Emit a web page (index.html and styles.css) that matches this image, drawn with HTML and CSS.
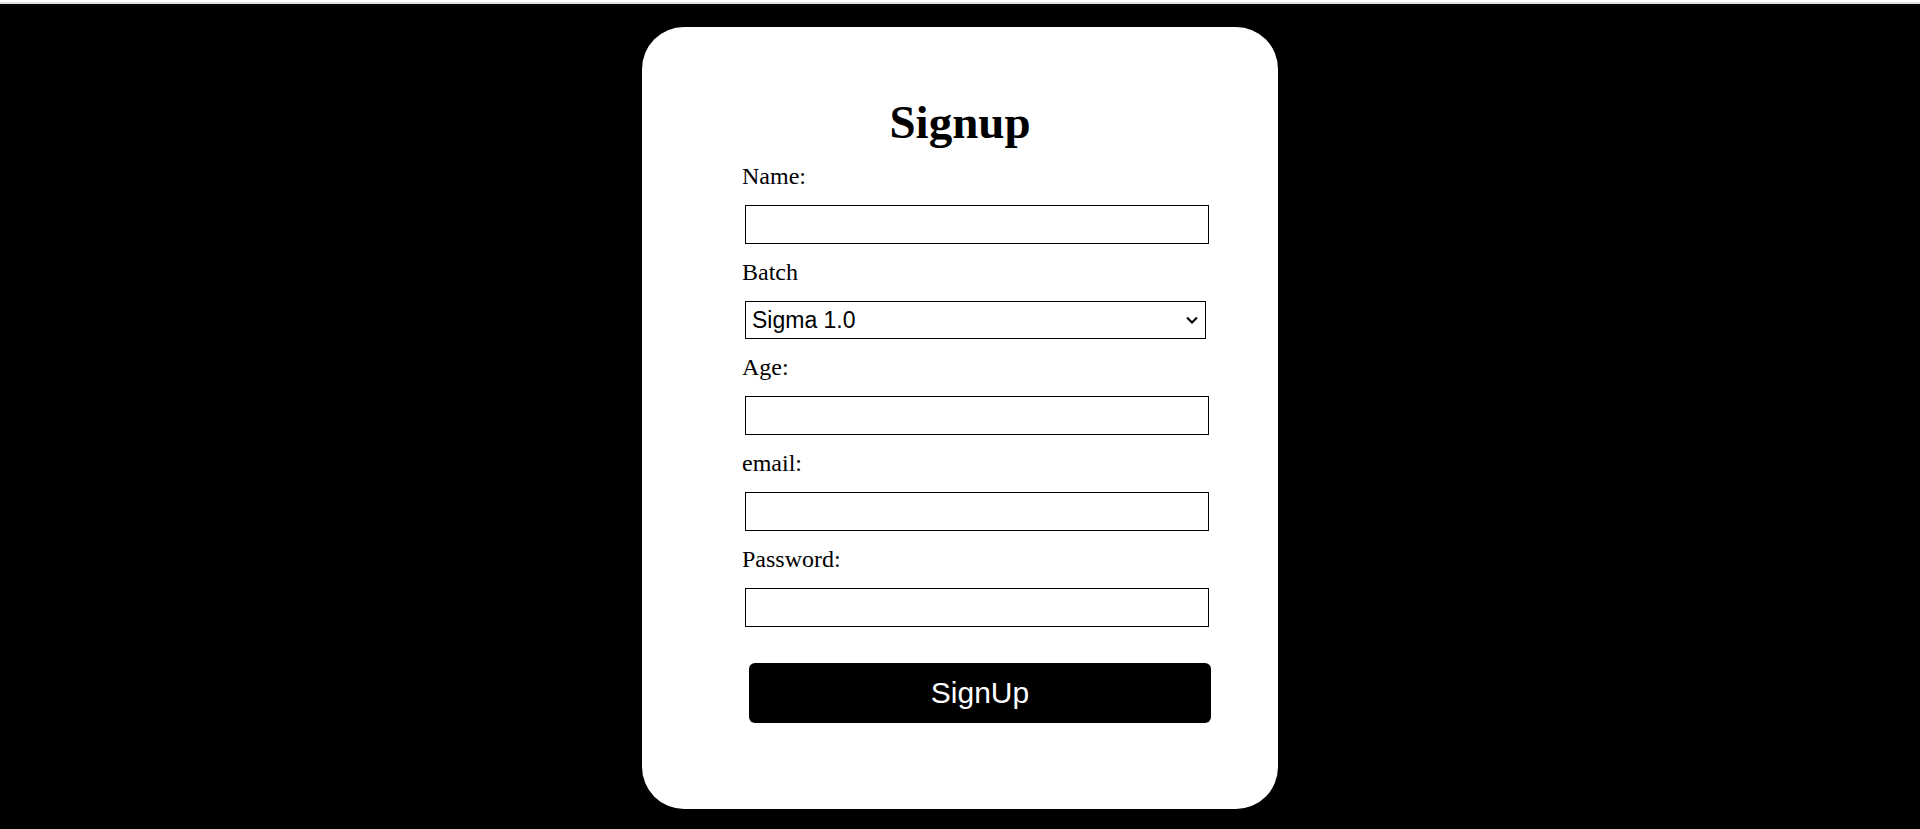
FILE: index.html
```html
<!DOCTYPE html>
<html lang="en">

<head>
    <meta charset="UTF-8">
    <meta name="viewport" content="width=device-width, initial-scale=1.0">
    <title>Signup</title>
    <link rel="stylesheet" href="styles.css">
</head>

<body>
    <div class="topline"></div>
    <div class="card">
        <h1>Signup</h1>
        <form class="signup-form" onsubmit="return false">
            <label for="name">Name:</label>
            <input type="text" id="name">

            <label for="batch">Batch</label>
            <select id="batch">
                <option>Sigma 1.0</option>
                <option>Sigma 2.0</option>
                <option>Alpha</option>
            </select>

            <label for="age">Age:</label>
            <input type="number" id="age">

            <label for="email">email:</label>
            <input type="email" id="email">

            <label for="password">Password:</label>
            <input type="password" id="password">

            <button type="submit">SignUp</button>
        </form>
    </div>
</body>

</html>
```

FILE: styles.css
```css
* {
    box-sizing: border-box;
}

body {
    margin: 0;
    padding: 0;
    background: #000;
    font-family: "Liberation Serif", "Times New Roman", serif;
    color: #000;
}

.topline {
    height: 4px;
    border-top: 2px solid #fff;
    background: #e0e0e0;
}

.card {
    width: 636px;
    height: 782px;
    margin: 23px auto 0;
    padding: 68px 0 85px;
    background: #fff;
    border-radius: 42px;
}

.card h1 {
    margin: 0;
    font-size: 47px;
    font-weight: bold;
    text-align: center;
}

.signup-form {
    display: flex;
    flex-direction: column;
    align-items: flex-start;
    gap: 15px;
    margin-top: 14px;
    padding-left: 100px;
}

.signup-form label {
    font-size: 24px;
    line-height: 27px;
}

.signup-form input {
    width: 464px;
    height: 39px;
    margin: 0 0 0 3px;
    border: 1px solid #000;
    border-radius: 0;
    padding: 2px 6px;
    font-size: 20px;
    font-family: "Liberation Sans", Arial, sans-serif;
}

.signup-form select {
    -webkit-appearance: none;
    appearance: none;
    width: 461px;
    height: 38px;
    margin: 0 0 0 3px;
    border: 1px solid #000;
    border-radius: 0;
    padding: 0 30px 0 6px;
    font-size: 23px;
    font-family: "Liberation Sans", Arial, sans-serif;
    color: #000;
    background: #fff url("data:image/svg+xml;utf8,<svg xmlns='http://www.w3.org/2000/svg' width='12' height='8' viewBox='0 0 12 8'><path d='M1 1.5l5 5 5-5' fill='none' stroke='black' stroke-width='2'/></svg>") no-repeat right 7px center;
}

.signup-form button {
    width: 462px;
    height: 60px;
    margin: 21px 0 0 7px;
    border: none;
    border-radius: 6px;
    background: #000;
    color: #fff;
    font-size: 30px;
    font-family: "Liberation Sans", Arial, sans-serif;
    cursor: pointer;
}
```
